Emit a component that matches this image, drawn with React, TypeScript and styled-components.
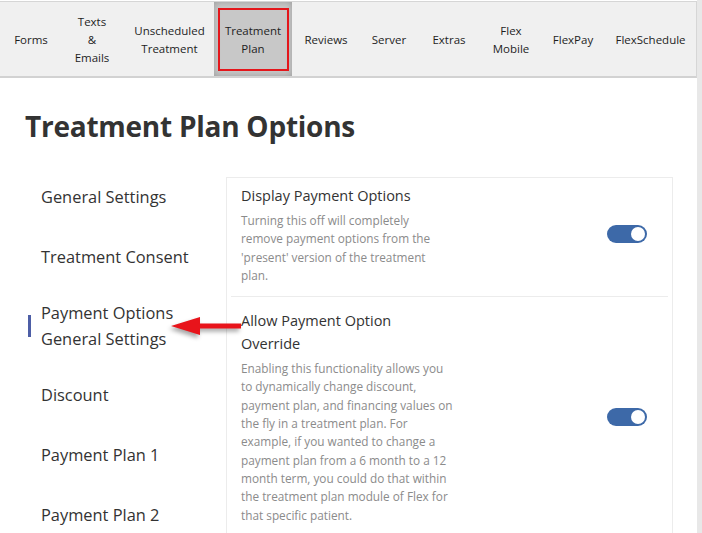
import styled, { createGlobalStyle } from "styled-components";

const GlobalStyle = createGlobalStyle`
  html, body {
    margin: 0;
    padding: 0;
    background: #fff;
  }
  body {
    font-family: "Open Sans", "Noto Sans", "Liberation Sans", sans-serif;
    color: #333;
  }
`;

const Page = styled.div`
  width: 702px;
  height: 533px;
  box-sizing: border-box;
  padding-top: 1px;
  border-right: 5px solid #e8e8e8;
  overflow: hidden;
`;

const NavBar = styled.nav`
  display: flex;
  align-items: stretch;
  height: 74px;
  padding-left: 3px;
  background: #f0f0f0;
  border-top: 1px solid #d6d6d6;
  border-bottom: 2px solid #d2d2d2;
  border-right: 1px solid #d6d6d6;
`;

const NavItem = styled.div<{ $width: number; $active?: boolean }>`
  position: relative;
  display: flex;
  align-items: center;
  justify-content: center;
  flex: 0 0 ${(p) => p.$width}px;
  padding-top: 2px;
  text-align: center;
  font-size: 11.5px;
  line-height: 18px;
  color: #1e1e1e;
  background: ${(p) => (p.$active ? "#c8c8c8" : "transparent")};
  box-shadow: ${(p) => (p.$active ? "inset 0 0 7px rgba(0, 0, 0, 0.22)" : "none")};

  &::after {
    content: "";
    display: ${(p) => (p.$active ? "block" : "none")};
    position: absolute;
    left: 4px;
    right: 3px;
    top: 6px;
    bottom: 5px;
    border: 2.5px solid #e4161b;
  }
`;

const Main = styled.main`
  padding-left: 25px;
`;

const Title = styled.h1`
  margin: 28px 0 21px;
  font-size: 28px;
  line-height: 40px;
  font-weight: 700;
  color: #333;
  letter-spacing: -0.25px;
`;

const Body = styled.div`
  position: relative;
  display: flex;
  align-items: flex-start;
`;

const Sidebar = styled.ul`
  list-style: none;
  margin: 0;
  padding: 0 0 0 3px;
  width: 198px;
  flex: 0 0 198px;
`;

const SideItem = styled.li<{ $tight?: boolean }>`
  display: flex;
  align-items: center;
  padding: ${(p) => (p.$tight ? "13px 0" : "17px 0")};
  font-size: 16.4px;
  line-height: 26px;
  color: #333;
`;

const Marker = styled.span<{ $active?: boolean }>`
  flex: 0 0 3px;
  height: 22px;
  margin-right: 10px;
  background: ${(p) => (p.$active ? "#4d5ea6" : "transparent")};
`;

const Card = styled.section`
  margin-top: 10px;
  width: 447px;
  box-sizing: border-box;
  border: 1px solid #ececec;
  padding: 0 4px;
`;

const Row = styled.div`
  display: flex;
  align-items: center;
  justify-content: space-between;
  padding: 12px 21px 13px 10px;
  border-bottom: 1px solid #ececec;

  &:first-child {
    padding-top: 6px;
    padding-bottom: 12px;
  }
`;

const RowText = styled.div`
  display: flex;
  flex-direction: column;
  gap: 4px;
`;

const RowTitle = styled.div`
  font-size: 14.5px;
  line-height: 23px;
  color: #333;
  white-space: nowrap;
`;

const RowDesc = styled.div`
  font-size: 11.8px;
  line-height: 18.3px;
  color: #8b8b8b;
  white-space: nowrap;
`;

const Toggle = styled.span<{ $on?: boolean }>`
  position: relative;
  flex: 0 0 40px;
  height: 18px;
  border-radius: 9px;
  background: ${(p) => (p.$on ? "#3d69a8" : "#ccc")};

  &::after {
    content: "";
    position: absolute;
    top: 2px;
    ${(p) => (p.$on ? "right: 2px;" : "left: 2px;")}
    width: 14px;
    height: 14px;
    border-radius: 50%;
    background: #fff;
  }
`;

const Arrow = styled.svg`
  position: absolute;
  left: 140px;
  top: 143px;
  overflow: visible;
  filter: drop-shadow(-2px 3px 2px rgba(0, 0, 0, 0.35));
`;

const navItems = [
  { label: ["Forms"], width: 56 },
  { label: ["Texts", "&", "Emails"], width: 66 },
  { label: ["Unscheduled", "Treatment"], width: 89 },
  { label: ["Treatment", "Plan"], width: 78, active: true },
  { label: ["Reviews"], width: 68 },
  { label: ["Server"], width: 58 },
  { label: ["Extras"], width: 62 },
  { label: ["Flex", "Mobile"], width: 62 },
  { label: ["FlexPay"], width: 62 },
  { label: ["FlexSchedule"], width: 93 },
];

const sideItems = [
  { lines: ["General Settings"] },
  { lines: ["Treatment Consent"] },
  { lines: ["Payment Options", "General Settings"], active: true },
  { lines: ["Discount"] },
  { lines: ["Payment Plan 1"] },
  { lines: ["Payment Plan 2"] },
];

const settings = [
  {
    title: ["Display Payment Options"],
    desc: [
      "Turning this off will completely",
      "remove payment options from the",
      "'present' version of the treatment",
      "plan.",
    ],
    on: true,
  },
  {
    title: ["Allow Payment Option", "Override"],
    desc: [
      "Enabling this functionality allows you",
      "to dynamically change discount,",
      "payment plan, and financing values on",
      "the fly in a treatment plan. For",
      "example, if you wanted to change a",
      "payment plan from a 6 month to a 12",
      "month term, you could do that within",
      "the treatment plan module of Flex for",
      "that specific patient.",
    ],
    on: true,
  },
];

const withBreaks = (lines: string[]) =>
  lines.map((line, i) => (
    <span key={i}>
      {line}
      {i < lines.length - 1 && <br />}
    </span>
  ));

export default function App() {
  return (
    <>
      <GlobalStyle />
      <Page>
        <NavBar>
          {navItems.map((item) => (
            <NavItem key={item.label.join(" ")} $width={item.width} $active={item.active}>
              <div>{withBreaks(item.label)}</div>
            </NavItem>
          ))}
        </NavBar>
        <Main>
          <Title>Treatment Plan Options</Title>
          <Body>
            <Sidebar>
              {sideItems.map((item) => (
                <SideItem key={item.lines.join(" ")} $tight={item.lines.length > 1}>
                  <Marker $active={item.active} />
                  <div>{withBreaks(item.lines)}</div>
                </SideItem>
              ))}
            </Sidebar>
            <Card>
              {settings.map((s) => (
                <Row key={s.title.join(" ")}>
                  <RowText>
                    <RowTitle>{withBreaks(s.title)}</RowTitle>
                    <RowDesc>{withBreaks(s.desc)}</RowDesc>
                  </RowText>
                  <Toggle $on={s.on} />
                </Row>
              ))}
            </Card>
            <Arrow width="80" height="32" viewBox="0 0 80 32">
              <path d="M6 16 L35 7 L35 13.5 L76 13.5 L76 18.5 L35 18.5 L35 25 Z" fill="#e8141b" />
            </Arrow>
          </Body>
        </Main>
      </Page>
    </>
  );
}
